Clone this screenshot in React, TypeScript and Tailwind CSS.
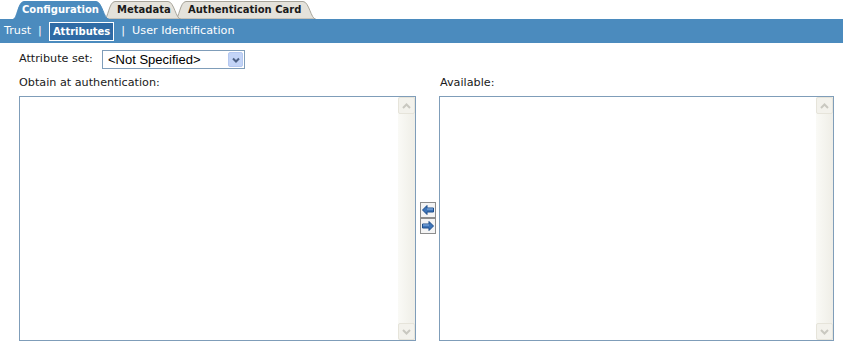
import { ReactNode } from 'react';

// Tab shape drawn behind the label
function Tab({ label, active, width, z, className }: { label: string; active?: boolean; width: number; z: string; className?: string }) {
  const w = width;
  const d = `M0.5,19 C4,19 5,1.5 11,1.5 L${w - 13},1.5 C${w - 7},1.5 ${w - 5},19 ${w - 0.5},19`;
  return (
    <div className={`relative h-[19px] flex items-center ${z} ${className ?? ''}`} style={{ width: w }}>
      <svg className="absolute inset-0" width={w} height={19}>
        <path d={d + ' Z'} fill={active ? '#4b8bbe' : '#e4e2db'} stroke={active ? '#4b8bbe' : '#a8a59b'} strokeWidth={1} />
      </svg>
      <span className={`relative font-bold text-[10px] leading-none pt-[1px] ${active ? 'text-white pl-[9px]' : 'text-[#1a1a1a] pl-[13px]'}`}>{label}</span>
    </div>
  );
}

function ScrollButton({ up }: { up?: boolean }) {
  return (
    <div className="w-[17px] h-[17px] rounded-[2px] bg-[#f3f2ec] border border-[#e6e4da] flex items-center justify-center">
      <svg width="9" height="6" viewBox="0 0 9 6">
        <path d={up ? 'M1,5 L4.5,1.5 L8,5' : 'M1,1 L4.5,4.5 L8,1'} fill="none" stroke="#c9c8c0" strokeWidth={2} />
      </svg>
    </div>
  );
}

function ListBox({ width }: { width: number }) {
  return (
    <div className="h-[245px] border border-[#7f9db9] bg-white flex justify-end" style={{ width }}>
      <div className="w-[17px] h-full flex flex-col justify-between bg-gradient-to-r from-[#fafaf6] to-[#efeee7]">
        <ScrollButton up />
        <ScrollButton />
      </div>
    </div>
  );
}

function ArrowButton({ dir }: { dir: 'left' | 'right' }) {
  const p = dir === 'left'
    ? 'M1.5,6 L6,1.5 L6,4 L12.5,4 L12.5,8 L6,8 L6,10.5 Z'
    : 'M12.5,6 L8,1.5 L8,4 L1.5,4 L1.5,8 L8,8 L8,10.5 Z';
  return (
    <div className="w-[16px] h-[16px] border border-[#8d8d8d] bg-[#f4f4f4] flex items-center justify-center">
      <svg width="14" height="12" viewBox="0 0 14 12">
        <path d={p} fill="#3d74b8" stroke="#1d4d8a" strokeWidth={1} strokeLinejoin="miter" />
        <path d={dir === 'left' ? 'M6,5 L12,5' : 'M2,5 L8,5'} stroke="#8fb6e6" strokeWidth={1} />
      </svg>
    </div>
  );
}

function Sep({ children }: { children?: ReactNode }) {
  return <span className="px-[7px]">{children ?? '|'}</span>;
}

export default function App() {
  return (
    <div className="w-[843px] h-[341px] bg-white overflow-hidden font-['DejaVu_Sans',sans-serif] text-[11.2px] text-[#1a1a1a]">
      {/* Tabs */}
      <div className="h-[19px] flex items-end pl-[13px]">
        <Tab label="Configuration" active width={96} z="z-30" />
        <Tab label="Metadata" width={77} z="z-20" className="-ml-[5px]" />
        <Tab label="Authentication Card" width={141} z="z-10" className="-ml-[6px]" />
      </div>

      {/* Sub navigation */}
      <div className="h-[24px] bg-[#4b8bbe] flex items-center pl-[4px] text-white">
        <span>Trust</span>
        <Sep />
        <span className="border border-white bg-[#2f6ba5] font-bold text-[10px] px-[3px] h-[19px] flex items-center">Attributes</span>
        <Sep />
        <span>User Identification</span>
      </div>

      <div className="pl-[19px]">
        <div className="mt-[7px] h-[19px] flex items-center">
          <span className="w-[83px]">Attribute set:</span>
          <div className="w-[143px] h-[19px] border border-[#7f9db9] flex items-center pl-[5px] pr-[1px] font-['Liberation_Sans',sans-serif] text-[13px] text-black">
            <span className="flex-1">&lt;Not Specified&gt;</span>
            <div className="w-[15px] h-[15px] rounded-[2px] bg-[#c3d4f7] border border-[#b5c8f0] flex items-center justify-center">
              <svg width="8" height="6" viewBox="0 0 8 6">
                <path d="M1,1.5 L4,4.5 L7,1.5" fill="none" stroke="#4d6185" strokeWidth={2} />
              </svg>
            </div>
          </div>
        </div>

        <div className="mt-[7px] flex h-[14px] items-center">
          <span className="w-[421px]">Obtain at authentication:</span>
          <span>Available:</span>
        </div>

        <div className="mt-[6px] flex items-start">
          <ListBox width={397} />
          <div className="w-[23px] h-[245px] flex flex-col items-center pt-[106px]">
            <ArrowButton dir="left" />
            <ArrowButton dir="right" />
          </div>
          <ListBox width={395} />
        </div>
      </div>
    </div>
  );
}
